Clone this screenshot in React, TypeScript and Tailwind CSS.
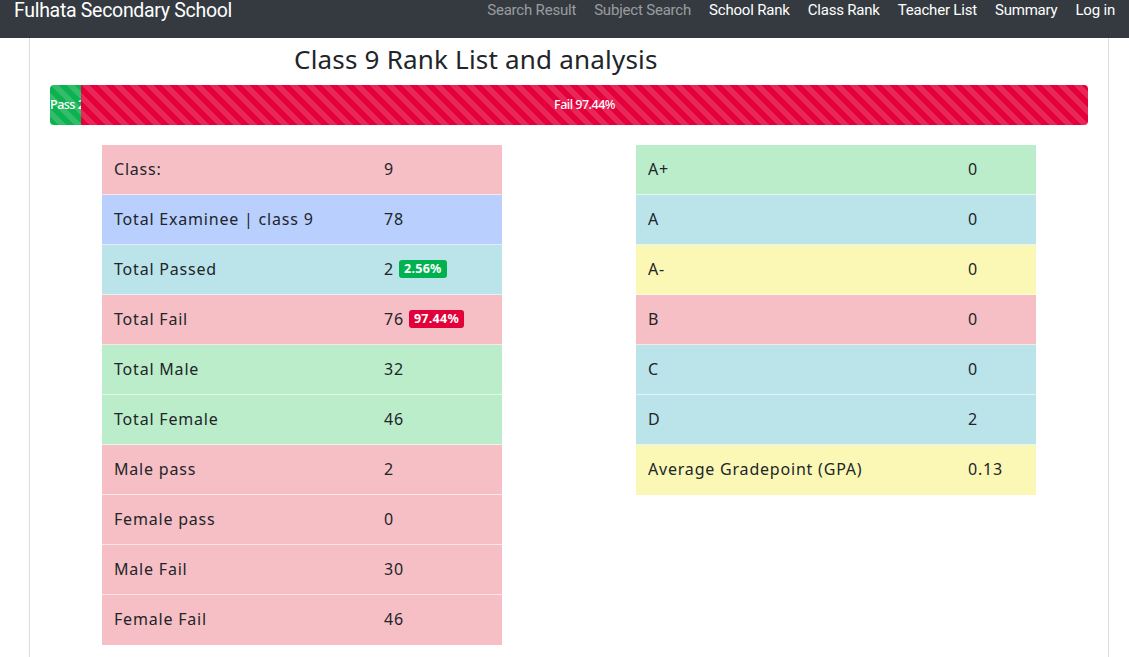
import React from "react";

const leftRows = [
  { label: "Class:", value: "9", bg: "bg-[#f6bfc5]" },
  { label: "Total Examinee | class 9", value: "78", bg: "bg-[#b9cffd]" },
  { label: "Total Passed", value: "2", bg: "bg-[#bae4ea]", badge: "2.56%", badgeBg: "bg-[#00b14f]" },
  { label: "Total Fail", value: "76", bg: "bg-[#f6bfc5]", badge: "97.44%", badgeBg: "bg-[#e2003a]" },
  { label: "Total Male", value: "32", bg: "bg-[#bcedca]" },
  { label: "Total Female", value: "46", bg: "bg-[#bcedca]" },
  { label: "Male pass", value: "2", bg: "bg-[#f6bfc5]" },
  { label: "Female pass", value: "0", bg: "bg-[#f6bfc5]" },
  { label: "Male Fail", value: "30", bg: "bg-[#f6bfc5]" },
  { label: "Female Fail", value: "46", bg: "bg-[#f6bfc5]" },
];

const gradeRows = [
  { label: "A+", value: "0", bg: "bg-[#bcedca]" },
  { label: "A", value: "0", bg: "bg-[#bae4ea]" },
  { label: "A-", value: "0", bg: "bg-[#fbf8b6]" },
  { label: "B", value: "0", bg: "bg-[#f6bfc5]" },
  { label: "C", value: "0", bg: "bg-[#bae4ea]" },
  { label: "D", value: "2", bg: "bg-[#bae4ea]" },
  { label: "Average Gradepoint (GPA)", value: "0.13", bg: "bg-[#fbf8b6]" },
];

const navLinks = [
  { label: "Search Result", muted: true },
  { label: "Subject Search", muted: true },
  { label: "School Rank" },
  { label: "Class Rank" },
  { label: "Teacher List" },
  { label: "Summary" },
  { label: "Log in" },
];

const stripes =
  "bg-[linear-gradient(45deg,rgba(255,255,255,.15)_25%,transparent_25%,transparent_50%,rgba(255,255,255,.15)_50%,rgba(255,255,255,.15)_75%,transparent_75%,transparent)] bg-[length:16px_16px]";

export default function App() {
  return (
    <div className="min-h-[657px] bg-white font-['Noto_Sans',sans-serif] text-[#212529]">
      <nav className="flex h-[38px] items-start justify-between bg-[#343a40] pl-[14px] pr-[14px] font-['Roboto',sans-serif]">
        <span className="-mt-[2px] text-[19.5px] leading-[26px] tracking-[-0.3px] text-white">
          Fulhata Secondary School
        </span>
        <ul className="flex gap-[18px] pt-[1px]">
          {navLinks.map((l) => (
            <li
              key={l.label}
              className={`text-[15px] leading-[18px] tracking-[-0.2px] ${
                l.muted ? "text-white/50" : "text-white"
              }`}
            >
              {l.label}
            </li>
          ))}
        </ul>
      </nav>

      <main className="ml-[29px] mr-[20px] min-h-[619px] border-x border-[#dddddd] px-[20px]">
        <h1 className="pl-[244px] pt-[4px] text-[26px] leading-[34px] tracking-[0.2px] text-[#212529]">
          Class 9 Rank List and analysis
        </h1>

        <div className="mt-[9px] flex h-[40px] overflow-hidden rounded-[4px] text-[12.5px] font-medium tracking-[-0.5px] text-white">
          <div className={`flex w-[31px] items-center overflow-hidden whitespace-nowrap bg-[#0db14f] ${stripes}`}>
            Pass 2
          </div>
          <div className={`flex flex-1 items-center justify-center bg-[#e4003a] ${stripes}`}>
            Fail 97.44%
          </div>
        </div>

        <div className="mt-[19px] flex pl-[52px]">
          <table className="w-[400px] border-collapse text-[16px] tracking-[0.8px]">
            <tbody>
              {leftRows.map((r) => (
                <tr key={r.label} className={`${r.bg} h-[50px] border-t border-white/60`}>
                  <td className="w-[282px] pb-[1px] pl-[12px]">{r.label}</td>
                  <td className="pb-[1px]">
                    <span className="inline-flex items-center gap-[5px]">
                      {r.value}
                      {r.badge && (
                        <span
                          className={`${r.badgeBg} rounded-[3px] px-[5px] text-[12.5px] font-bold leading-[18px] tracking-[0.3px] text-white`}
                        >
                          {r.badge}
                        </span>
                      )}
                    </span>
                  </td>
                </tr>
              ))}
            </tbody>
          </table>

          <table className="ml-[134px] h-fit w-[400px] border-collapse text-[16px] tracking-[0.8px]">
            <tbody>
              {gradeRows.map((r) => (
                <tr key={r.label} className={`${r.bg} h-[50px] border-t border-white/60`}>
                  <td className="w-[332px] pb-[1px] pl-[12px]">{r.label}</td>
                  <td className="pb-[1px]">{r.value}</td>
                </tr>
              ))}
            </tbody>
          </table>
        </div>
      </main>
    </div>
  );
}
